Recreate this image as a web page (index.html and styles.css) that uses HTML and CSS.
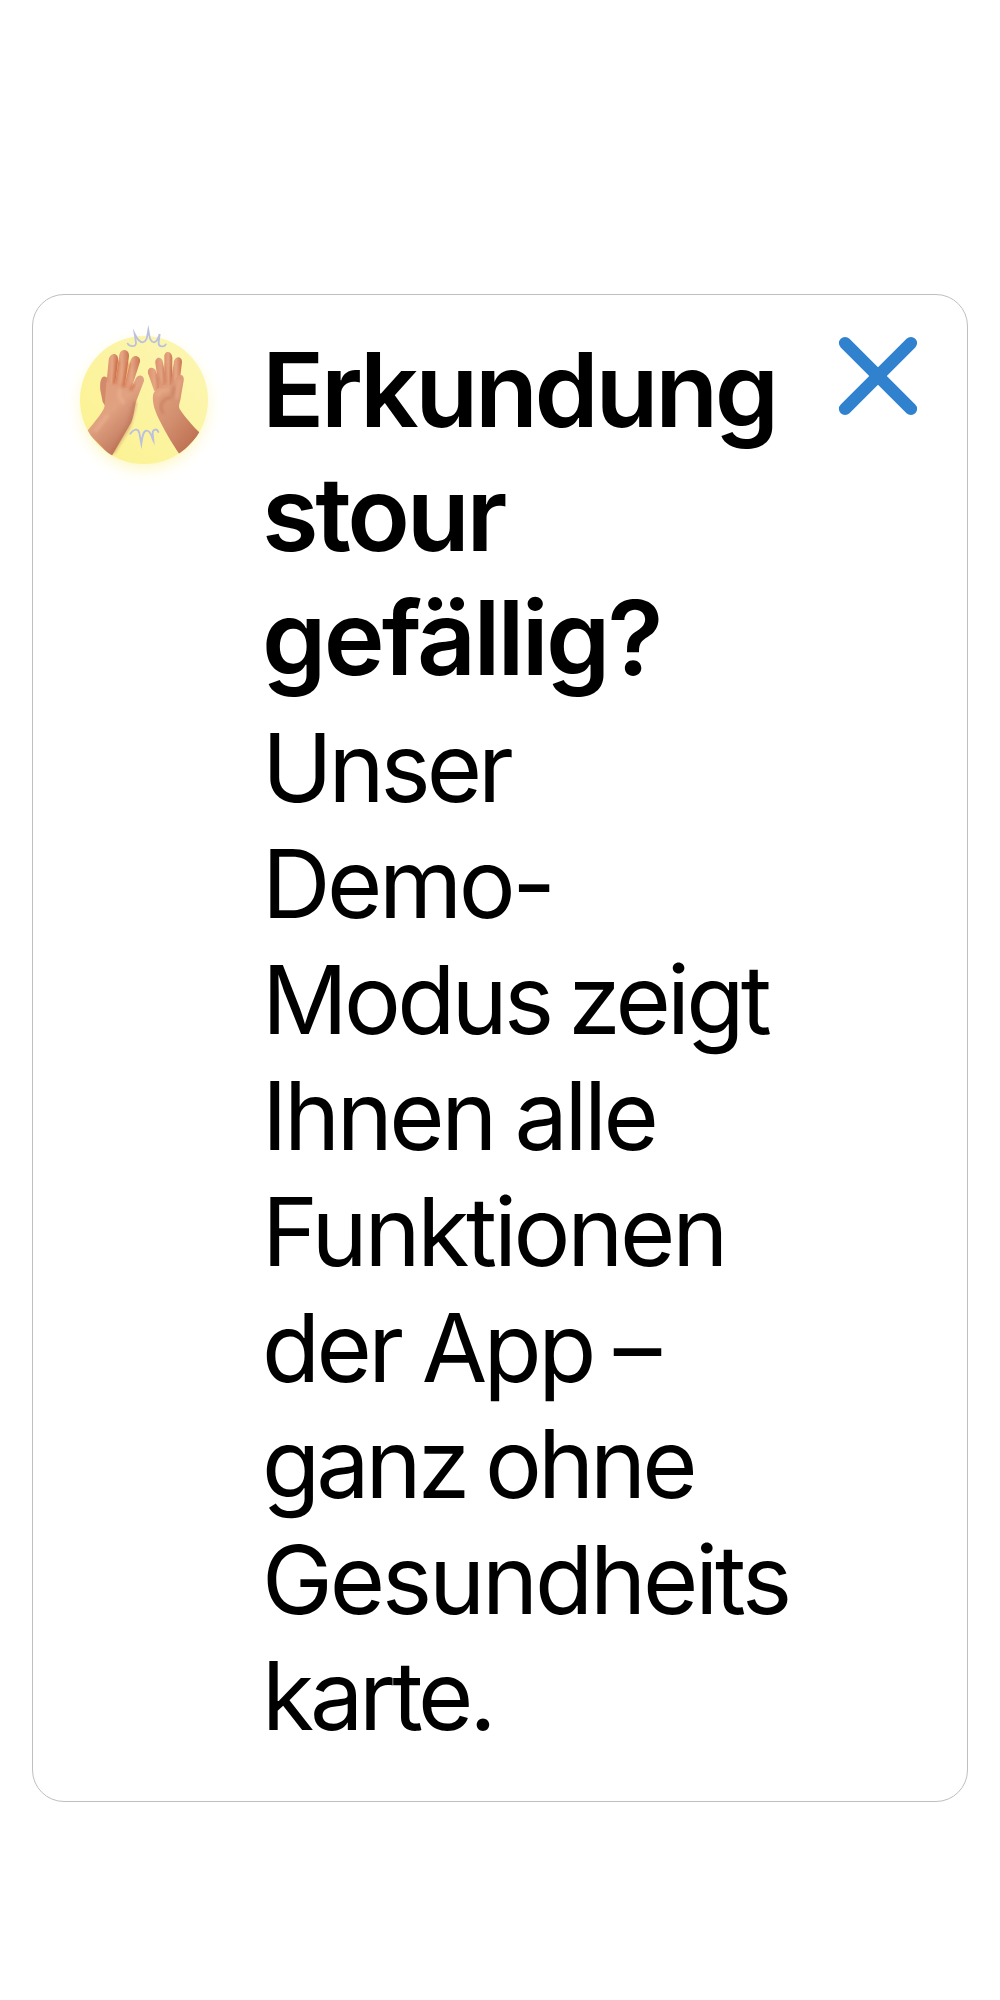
FILE: index.html
```html
<!DOCTYPE html>
<html lang="de">
<head>
<meta charset="utf-8">
<title>Demo-Modus</title>
<link rel="stylesheet" href="styles.css">
</head>
<body>
<section class="card">
  <svg class="hands" viewBox="0 0 510 540" aria-hidden="true">
    <defs>
      <linearGradient id="disc" x1="0" y1="1" x2="1" y2="0"><stop offset="0" stop-color="#fcf18e"/><stop offset="1" stop-color="#fcf6b5"/></linearGradient>
      <linearGradient id="skinL" x1="0" y1="0" x2=".65" y2="1"><stop offset="0" stop-color="#e09a7a"/><stop offset=".5" stop-color="#e0a281"/><stop offset="1" stop-color="#b96e55"/></linearGradient>
      <linearGradient id="skinR" x1="0" y1="0" x2=".7" y2="1"><stop offset="0" stop-color="#e8a884"/><stop offset=".55" stop-color="#d39070"/><stop offset="1" stop-color="#bd7052"/></linearGradient>
      <linearGradient id="finger" x1="0" y1="0" x2="1" y2="0"><stop offset="0" stop-color="#dc9270"/><stop offset=".5" stop-color="#e5a583"/><stop offset="1" stop-color="#cb7553"/></linearGradient>
      <filter id="glow" x="-40%" y="-40%" width="180%" height="180%"><feGaussianBlur stdDeviation="22"/></filter>
      <filter id="soft"><feGaussianBlur stdDeviation="5"/></filter>
      <clipPath id="below"><path d="M0 0H510V270H444A192 192 0 0 1 60 270H0Z"/></clipPath>
    </defs>
    <circle cx="252" cy="288" r="188" fill="#fcf3a0" opacity=".65" filter="url(#glow)"/>
    <circle cx="252" cy="270" r="192" fill="url(#disc)"/>
    <g clip-path="url(#below)">
      <path fill="#d28a6b" d="M139 201C124 193 118 215 121 241L128 276 145 302 156 220Z"/>
      <path fill="url(#finger)" d="M139 224L146 151C149 125 177 126 174 151L165 227Z"/>
      <path fill="url(#finger)" d="M164 230L178 134C181 113 209 116 207 139L193 238Z"/>
      <path fill="url(#finger)" d="M191 238L212 150C219 130 243 138 240 155L211 246Z"/>
      <path fill="url(#skinL)" d="M139 217C153 221 164 215 177 228C190 237 204 231 211 240L228 204C236 190 254 196 252 213L229 273C223 292 224 312 214 337L154 440 80 365C105 334 135 301 134 285Z"/>
      <path fill="none" stroke="#c8552f" stroke-width="9" opacity=".55" filter="url(#soft)" d="M162 222L175 151M188 232L208 158M211 242L221 222"/>
      <path fill="none" stroke="#b96f53" stroke-width="12" opacity=".45" filter="url(#soft)" d="M226 275Q215 320 205 351L157 430"/>
      <path fill="none" stroke="#f0b797" stroke-width="11" opacity=".5" filter="url(#soft)" d="M182 235Q169 258 193 280M145 314L105 365"/>
      <path fill="url(#finger)" d="M283 244L264 190C261 171 280 169 287 181L304 237Z"/>
      <path fill="url(#finger)" d="M297 235L286 160C284 140 305 138 308 154L322 228Z"/>
      <path fill="url(#finger)" d="M313 226L313 143C311 120 336 121 337 143L336 232Z"/>
      <path fill="url(#finger)" d="M331 229L342 154C347 135 366 140 366 155L358 224Z"/>
      <path fill="url(#skinR)" d="M281 249C294 232 316 218 333 226L350 201C359 190 374 193 371 212L363 258C361 278 354 285 359 297C373 318 396 346 421 370L360 435C334 398 309 353 295 324C282 297 274 266 281 249Z"/>
      <path fill="none" stroke="#b66b4e" stroke-width="7" opacity=".55" filter="url(#soft)" d="M335 263C306 263 293 291 311 310M343 229L337 259"/>
      <path fill="none" stroke="#efb492" stroke-width="10" opacity=".5" filter="url(#soft)" d="M288 258Q307 238 327 241M359 209L350 267"/>
      <path fill="none" stroke="#b65a3c" stroke-width="5" opacity=".4" filter="url(#soft)" d="M289 190L304 230M311 164L320 222M336 170L336 221"/>
    </g>
    <path class="spark" d="M203 101C208 110 229 113 228 98L224 72C230 84 238 97 248 97C260 96 261 82 265 60C269 82 270 96 282 97C291 97 295 83 299 72L296 96C294 112 313 112 317 103"/>
    <path class="spark" d="M211 371C221 358 234 353 238 369L244 401C247 380 249 362 260 362C272 362 274 378 280 391L278 370C278 356 291 355 295 366"/>
  </svg>
  <div class="copy">
    <h1 class="title"><span class="line t1">Erkundung</span><span class="line t2">stour</span><span class="line t3">gefällig?</span></h1>
    <p class="text"><span class="line b1">Unser</span><span class="line b2">Demo-</span><span class="line b3">Modus zeigt</span><span class="line b4">Ihnen alle</span><span class="line b5">Funktionen</span><span class="line b6">der App –</span><span class="line b7">ganz ohne</span><span class="line b8">Gesundheits</span><span class="line b9">karte.</span></p>
  </div>
  <button class="close" aria-label="Schließen"><svg class="cross" viewBox="0 0 80 80"><path d="M7.1 7.1L72.9 72.9M72.9 7.1L7.1 72.9"/></svg></button>
</section>
</body>
</html>
```
FILE: styles.css
```css
body { margin: 0; background: #fff; }
.card {
  box-sizing: border-box;
  width: 936px;
  height: 1508px;
  margin: 294px 32px 0;
  padding: 15px 49px 0 27px;
  border: 1px solid #bfbfbf;
  border-radius: 32px;
  display: flex;
  align-items: flex-start;
  color: #000;
  font-family: Inter, "Liberation Sans", sans-serif;
}
.hands { flex: none; width: 170px; height: 180px; }
.copy { flex: 1; margin: 18px 0 0 32px; white-space: nowrap; min-width: 0; }
.title { margin: 0; font-size: 103px; line-height: 124px; font-weight: 600; }
.text { margin: 10px 0 0; font-size: 95px; line-height: 116px; }
.line { display: block; }
.t1 { letter-spacing: -3.4px; }
.t2 { letter-spacing: -3.3px; }
.t3 { letter-spacing: -2.8px; }
.b1 { letter-spacing: -4.1px; }
.b2 { letter-spacing: -3.5px; }
.b3 { letter-spacing: -3.8px; word-spacing: -5px; }
.b4 { letter-spacing: -3.5px; word-spacing: -2.5px; }
.b5 { letter-spacing: -3.3px; }
.b6 { letter-spacing: -3.6px; word-spacing: -2px; }
.b7 { letter-spacing: -4px; word-spacing: -4px; }
.b8 { letter-spacing: -3.15px; }
.b9 { letter-spacing: -4.2px; }
.close { flex: none; margin: 26px 0 0; padding: 0; border: 0; background: none; width: 80px; height: 80px; }
.cross { display: block; width: 80px; height: 80px; fill: none; stroke: #3182ce; stroke-width: 12.4; stroke-linecap: round; }
.spark { fill: none; stroke: #bbc0df; stroke-width: 5.5; stroke-linecap: round; stroke-linejoin: miter; stroke-miterlimit: 8; }
```
